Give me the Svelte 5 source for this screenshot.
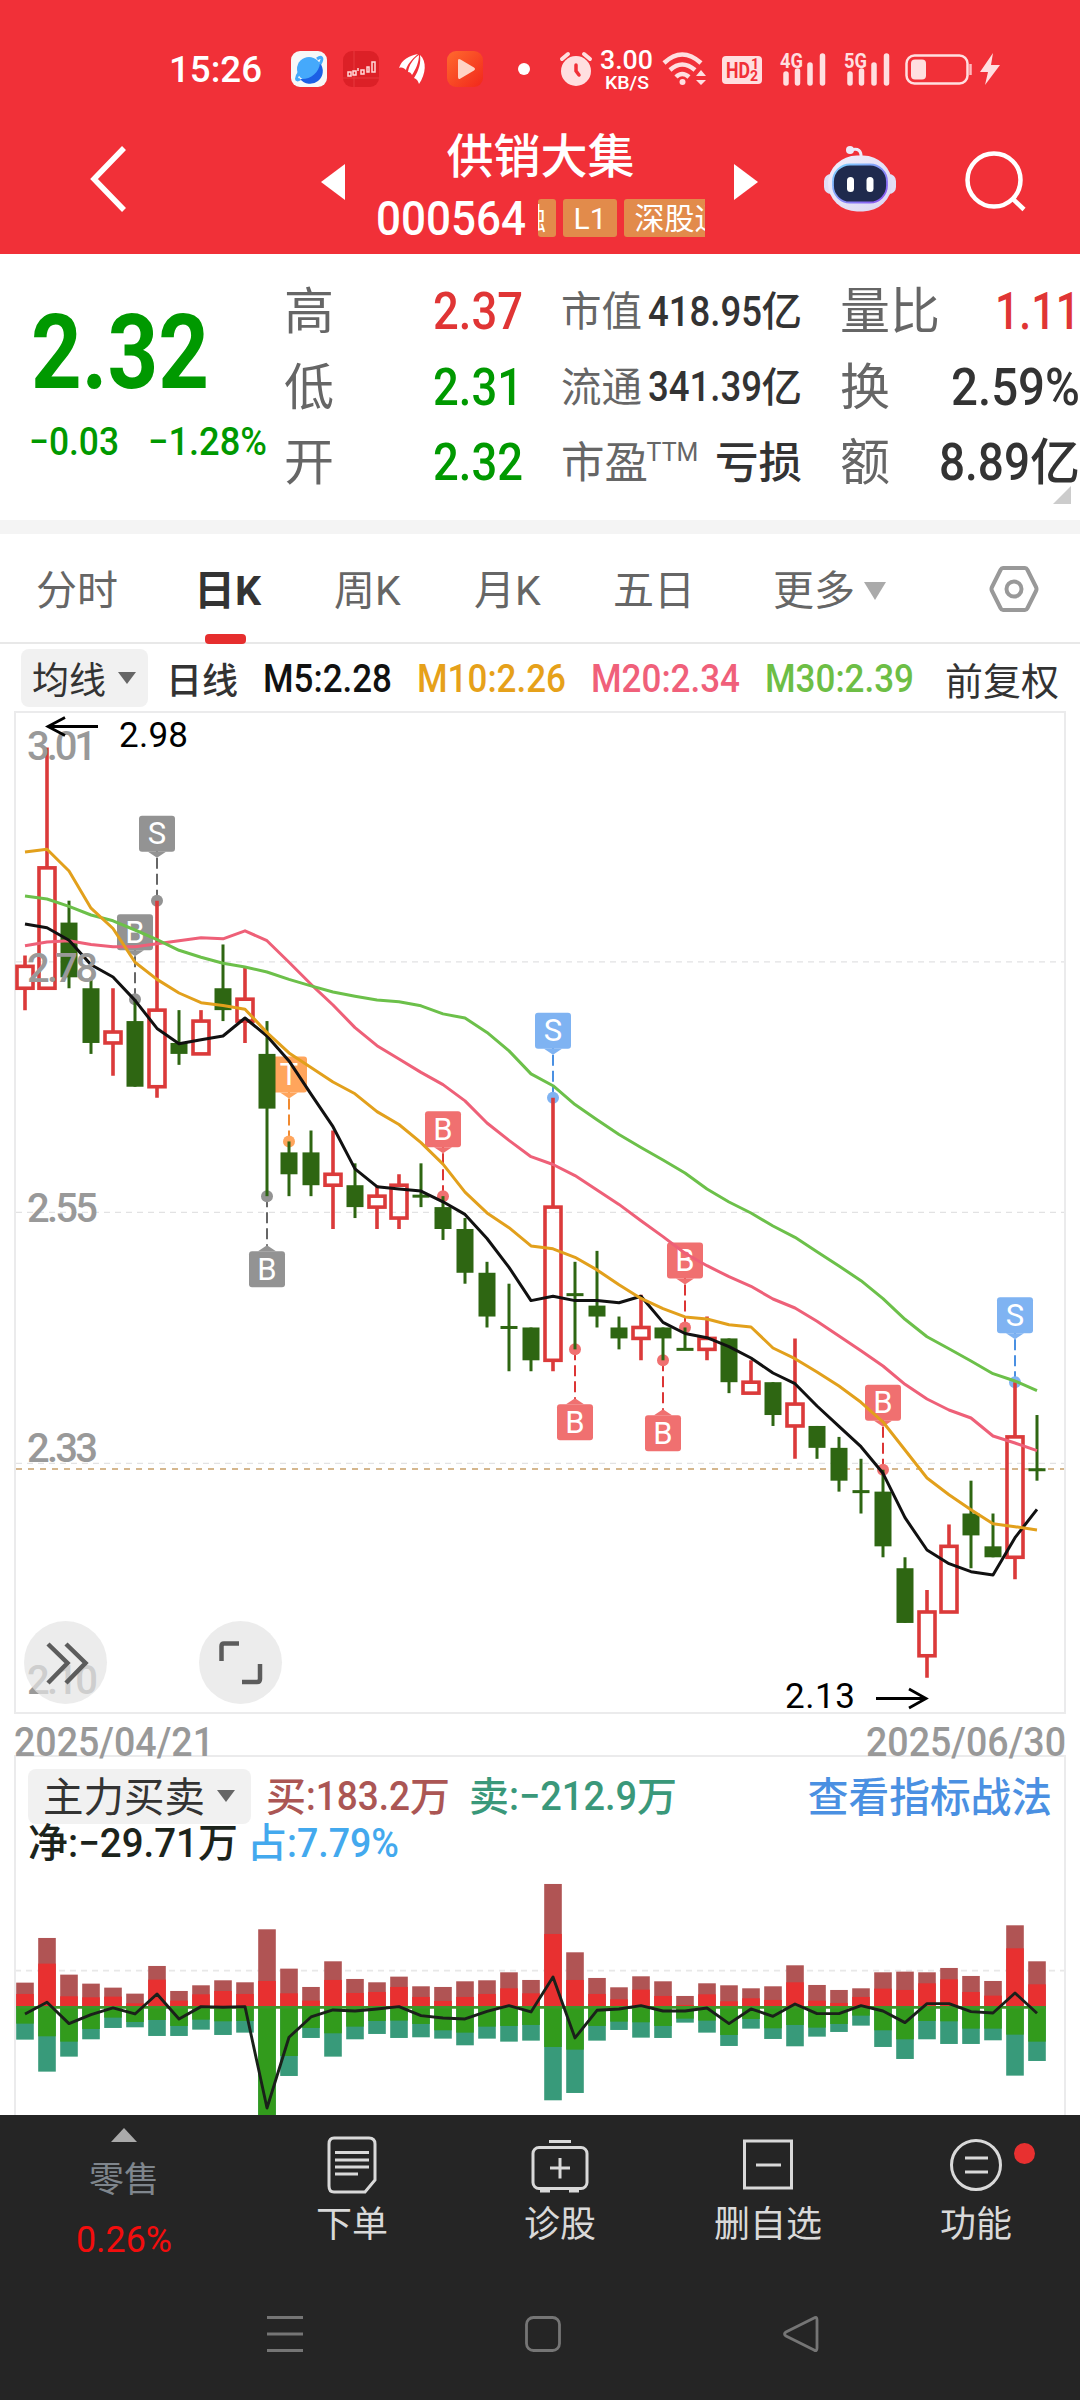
<script>
  // open, close, high, low
  const candles = [
    [2.76, 2.78, 2.79, 2.74], [2.76, 2.87, 2.98, 2.76], [2.82, 2.77, 2.84, 2.76], [2.76, 2.71, 2.77, 2.70],
    [2.71, 2.72, 2.76, 2.68], [2.73, 2.67, 2.75, 2.67], [2.67, 2.74, 2.84, 2.66], [2.71, 2.70, 2.74, 2.69],
    [2.70, 2.73, 2.74, 2.70], [2.76, 2.74, 2.80, 2.73], [2.73, 2.75, 2.78, 2.71], [2.70, 2.65, 2.73, 2.57],
    [2.61, 2.59, 2.62, 2.57], [2.61, 2.58, 2.63, 2.57], [2.58, 2.59, 2.63, 2.54], [2.58, 2.56, 2.60, 2.55],
    [2.56, 2.57, 2.58, 2.54], [2.55, 2.58, 2.59, 2.54], [2.57, 2.57, 2.60, 2.56], [2.56, 2.54, 2.57, 2.53],
    [2.54, 2.50, 2.55, 2.49], [2.50, 2.46, 2.51, 2.45], [2.45, 2.45, 2.49, 2.41], [2.45, 2.42, 2.45, 2.41],
    [2.42, 2.56, 2.66, 2.41], [2.48, 2.48, 2.51, 2.43], [2.47, 2.46, 2.52, 2.45], [2.45, 2.44, 2.46, 2.43],
    [2.44, 2.45, 2.48, 2.42], [2.45, 2.44, 2.45, 2.42], [2.43, 2.43, 2.45, 2.43], [2.43, 2.44, 2.46, 2.42],
    [2.44, 2.40, 2.44, 2.39], [2.39, 2.40, 2.42, 2.39], [2.40, 2.37, 2.40, 2.36], [2.36, 2.38, 2.44, 2.33],
    [2.36, 2.34, 2.36, 2.33], [2.34, 2.31, 2.35, 2.30], [2.30, 2.30, 2.33, 2.28], [2.30, 2.25, 2.32, 2.24],
    [2.23, 2.18, 2.24, 2.18], [2.15, 2.19, 2.21, 2.13], [2.19, 2.25, 2.27, 2.19], [2.28, 2.26, 2.31, 2.23],
    [2.25, 2.24, 2.28, 2.24], [2.24, 2.35, 2.40, 2.22], [2.32, 2.32, 2.37, 2.31]
  ];

  const averages = [
    { cls: "ma20", ys: [945.7, 941.9, 940.7, 944.5, 946.8, 946.8, 943.8, 940.7, 937.7, 938.8, 930.8, 940.7, 962.2, 984.3, 1005, 1027.6, 1045.7, 1059, 1072.4, 1084.6, 1100.9, 1123, 1140.4, 1156.7, 1164.5, 1175.6, 1190, 1204.4, 1220.7, 1236.6, 1253.3, 1265.7, 1276.7, 1286.3, 1299, 1308, 1321.3, 1336, 1350.7, 1366, 1384.3, 1399, 1410, 1418, 1436, 1443, 1450.7] },
    { cls: "ma30", ys: [895.9, 899, 906.3, 915, 920.8, 930, 939.6, 950.3, 957.2, 963.3, 967, 972, 979.4, 985.9, 992, 996.2, 999.9, 1001.7, 1005.8, 1013.9, 1018, 1032.4, 1050.9, 1073.9, 1085.7, 1104.6, 1119.7, 1134.5, 1147.5, 1160, 1173, 1189, 1202, 1213, 1226, 1237.3, 1251.7, 1266, 1280.7, 1298.7, 1319.3, 1336.7, 1348.7, 1361, 1373.7, 1381, 1390.7] },
    { cls: "ma5", ys: [923.9, 927.7, 940.3, 964.8, 977, 1000.4, 1028.4, 1043.7, 1039.8, 1036, 1018, 1036, 1060.9, 1094.2, 1126.7, 1168.9, 1186.7, 1188.9, 1191.1, 1201.8, 1214.4, 1238.5, 1267.3, 1300.6, 1296.2, 1300.6, 1300.6, 1302.8, 1296.2, 1322.4, 1333.5, 1337.7, 1346.7, 1358, 1373, 1383.7, 1406, 1426.3, 1446.7, 1473.3, 1517.7, 1550, 1563.7, 1571.7, 1575, 1537.7, 1509.3] },
    { cls: "ma10", ys: [851.9, 849.3, 871, 908.2, 928.5, 962.2, 979.4, 993, 1002.7, 1005.4, 1009.2, 1032.6, 1052.9, 1067.4, 1082, 1093.8, 1111.6, 1124.5, 1142.7, 1164.1, 1192.2, 1212.9, 1227.7, 1245.9, 1248.8, 1257.3, 1269.9, 1284.7, 1298.4, 1308.7, 1316.9, 1319, 1324.7, 1327, 1348, 1358.7, 1372, 1386, 1402.3, 1422, 1450, 1478, 1494.7, 1509.7, 1523.7, 1526.7, 1530] }
  ];

  const markers = [
    { i: 5, t: "B", p: 2.75, cls: "old" },
    { i: 6, t: "S", p: 2.84, cls: "old" },
    { i: 11, t: "B", p: 2.57, cls: "old", below: true },
    { i: 12, t: "T", p: 2.62, cls: "tee" },
    { i: 19, t: "B", p: 2.57, cls: "buy" },
    { i: 24, t: "S", p: 2.66, cls: "sell" },
    { i: 25, t: "B", p: 2.43, cls: "buy", below: true },
    { i: 29, t: "B", p: 2.42, cls: "buy", below: true },
    { i: 30, t: "B", p: 2.45, cls: "buy" },
    { i: 39, t: "B", p: 2.32, cls: "buy" },
    { i: 45, t: "S", p: 2.40, cls: "sell" }
  ];

  // buy total, buy main, sell main, sell total, net
  const flows = [
    [74, 40, 49, 97, -20], [208, 131, 87, 193, 15], [98, 33, 103, 148, -49], [71, 30, 65, 96, -22], [59, 32, 31, 62, -2],
    [41, 12, 44, 60, -20], [124, 83, 38, 86, 40], [49, 20, 56, 86, -35], [66, 39, 37, 67, 2], [81, 49, 42, 83, 0],
    [75, 40, 41, 76, 2], [234, 79, 330, 360, -302], [116, 42, 146, 206, -90], [61, 20, 62, 92, -29], [138, 82, 78, 148, -8],
    [85, 43, 58, 96, -11], [75, 46, 41, 80, -5], [92, 61, 40, 92, 2], [63, 31, 50, 90, -25], [61, 19, 69, 94, -32],
    [78, 31, 76, 114, -35], [81, 40, 58, 94, -12], [105, 57, 56, 103, 5], [82, 42, 53, 100, -14], [370, 220, 119, 279, 91],
    [165, 82, 127, 257, -92], [88, 40, 56, 100, -9], [60, 24, 43, 68, -5], [93, 53, 45, 91, 5], [78, 34, 56, 92, -11],
    [34, 7, 34, 46, -11], [72, 39, 40, 76, -2], [66, 18, 83, 116, -49], [57, 27, 35, 64, -5], [63, 22, 63, 95, -27],
    [126, 75, 53, 117, 10], [67, 20, 61, 88, -19], [52, 13, 50, 74, -19], [57, 31, 25, 55, 5], [105, 56, 69, 119, -11],
    [107, 52, 96, 155, -46], [105, 72, 41, 96, 11], [118, 84, 42, 110, 11], [94, 46, 64, 110, -13], [79, 35, 64, 99, -17],
    [246, 177, 82, 205, 43], [138, 69, 103, 161, -18]
  ];

  const base = 2007.3;
  const cx = (i) => 25 + i * 22;
  const py = (p) => 747.5 + (2.98 - p) * 1094.3;
  const line = (ys) => ys.map((y, i) => `${cx(i)},${y}`).join(" ");
  const netLine = line(flows.map((f) => base - f[4] / 3));
</script>

{#snippet fit(text, w, size, cls = "")}
  <svg class="fit {cls}" width={w} height={size}>
    <text x="0" y={size * 0.857} font-size={size} textLength={w} lengthAdjust="spacingAndGlyphs">{text}</text>
  </svg>
{/snippet}

{#snippet signal(name)}
  <svg class="signal" width="48" height="36">
    <text x="0" y="17" font-size="21" font-weight="700" textLength="23" lengthAdjust="spacingAndGlyphs">{name}</text>
    <path d="M6 23V32M17.500 20V32M30 14V32M42.500 5V32" stroke="#ffdfe0" stroke-width="5.500" stroke-linecap="round" />
  </svg>
{/snippet}

<div class="app">
  <header>
    <div class="status">
      <div class="left">
        {@render fit("15:26", 93, 36, "w500")}
        <svg class="app1" width="36" height="36">
          <rect width="36" height="36" rx="9" fill="#f7f7f8" />
          <circle cx="18" cy="18" r="12" fill="#45a9fb" />
          <path d="M29 12C28 22 19 29 9 28a12 12 0 0 0 20-16z" fill="#1c5fe5" />
          <path d="M9 28C4 31 5 26 8 22M26 8c4-3 7-2 3 5" fill="none" stroke="#45a9fb" stroke-width="3" />
        </svg>
        <svg class="app2" width="36" height="36">
          <rect width="36" height="36" rx="9" fill="#dc2027" />
          <path d="M0 27H36M11 0V36" stroke="#e8393e" />
          <path d="M5 25V21h3v4zM10 24v-4h3v4zM15 20v-3M18 23v-4h3v4zM24 21v-5h2v5zM29 21V11h3v10z" fill="none" stroke="#ffd9d9" stroke-width="1.500" />
        </svg>
        <svg class="kite" width="28" height="36" fill="#fff">
          <path d="M0 17C3 8 10 5 19 3C12 9 8 14 7 19C5 17 3 16 0 17z" />
          <path d="M9 21C10 14 14 8 20 4C20 11 17 18 13 24C12 22 11 21 9 21z" />
          <path d="M15 27C20 19 22 12 21 4C28 10 27 23 20 33C19 30 18 28 15 27z" />
        </svg>
        <svg class="play" width="36" height="36">
          <defs><linearGradient id="play" x1="0" y1="0" x2="1" y2="1"><stop offset="0" stop-color="#ff6a2e" /><stop offset="1" stop-color="#f2271b" /></linearGradient></defs>
          <rect width="36" height="36" rx="9" fill="url(#play)" />
          <path d="M11 9.500Q11 7 13.500 8.500L27 16.500Q29 18 27 19.500L13.500 27.500Q11 29 11 26z" fill="#ffd3c4" />
        </svg>
        <i class="dot"></i>
      </div>
      <div class="right">
        <svg width="34" height="36">
          <circle cx="17" cy="20" r="15" fill="#ffdfe0" />
          <path d="M3 8L9 3M31 8L25 3" stroke="#ffdfe0" stroke-width="4" stroke-linecap="round" />
          <path d="M17 14V20L20 24" fill="none" stroke="#f13038" stroke-width="3.500" stroke-linecap="round" />
        </svg>
        <div class="speed">
          {@render fit("3.00", 53, 25, "w500")}
          {@render fit("KB/S", 44, 19, "w500")}
        </div>
        <svg class="wifi" width="46" height="36" fill="none" stroke="#ffdfe0" stroke-width="4.500">
          <path d="M2 12Q20 -5 39 12M8 19Q20 8 33 19M14 26Q20 20 27 26" />
          <circle cx="20.500" cy="31" r="3" fill="#ffdfe0" stroke="none" />
          <path d="M39 19l5 6h-10zM39 34l5-5h-10z" fill="#ffdfe0" stroke="none" />
        </svg>
        <svg class="hd" width="40" height="36">
          <rect y="5" width="40" height="28" rx="4" fill="#ffdfe0" />
          <text x="4" y="27" font-size="22" font-weight="700" textLength="24" lengthAdjust="spacingAndGlyphs">HD</text>
          <text x="29" y="18" font-size="14" font-weight="700">1</text>
          <text x="28" y="30" font-size="14" font-weight="700">2</text>
        </svg>
        {@render signal("4G")}
        {@render signal("5G")}
        <svg class="battery" width="98" height="36">
          <rect x="1.500" y="4.500" width="61" height="28" rx="8" fill="none" stroke="#ffdfe0" stroke-width="2.500" />
          <rect x="6" y="8.500" width="15" height="20" rx="4" fill="#ffdfe0" />
          <path d="M65.500 13V24" stroke="#ffb9bc" stroke-width="2.500" />
          <path d="M88 2L75 21H83L80 34L95 14H86z" fill="#ffdfe0" />
        </svg>
      </div>
    </div>

    <div class="title">
      <svg class="back" width="40" height="70"><path d="M34 4L4 35L34 66" fill="none" stroke="#fff" stroke-width="5.500" /></svg>
      <svg class="prev" width="24" height="36"><path d="M24 0V36L0 18z" fill="#fff" /></svg>
      <div class="name">
        <div class="stock">供销大集</div>
        <div class="code">
          {@render fit("000564", 150, 48, "w500")}
          <div class="tags"><span class="cut">融</span><span>L1</span><span>深股通</span></div>
        </div>
      </div>
      <svg class="next" width="24" height="36"><path d="M0 0V36L24 18z" fill="#fff" /></svg>
      <svg class="robot" width="72" height="68">
        <defs>
          <linearGradient id="shell" x1="0" y1="0" x2="1" y2="1"><stop offset="0" stop-color="#f2effb" /><stop offset="1" stop-color="#d9d5f2" /></linearGradient>
          <linearGradient id="ring" x1="0" y1="0" x2="1" y2="1"><stop offset="0" stop-color="#7fd8ff" /><stop offset="1" stop-color="#8a4df0" /></linearGradient>
        </defs>
        <path d="M27 5Q38 2 37 13" fill="none" stroke="#eeeaf9" stroke-width="3" />
        <circle cx="26" cy="5" r="4" fill="#eeeaf9" />
        <rect x="0" y="29" width="72" height="20" rx="7" fill="#e2def5" />
        <rect x="4" y="10.500" width="64" height="56" rx="29" fill="url(#shell)" />
        <rect x="9" y="19.500" width="54" height="38" rx="17" fill="#1f2a4d" stroke="url(#ring)" stroke-width="1.800" />
        <rect x="23" y="32" width="7" height="15" rx="3.500" fill="#fff" />
        <rect x="42.500" y="32" width="7" height="15" rx="3.500" fill="#fff" />
      </svg>
      <svg class="search" width="62" height="62" fill="none" stroke="#fff" stroke-width="4.500">
        <circle cx="29" cy="29" r="26.500" /><path d="M48 48L59 58.500" />
      </svg>
    </div>
  </header>

  <section class="quote">
    <div class="price down">
      {@render fit("2.32", 178, 104, "w700")}
      <div class="change">
        {@render fit("−0.03", 90, 39, "w500")}
        {@render fit("−1.28%", 119, 39, "w500")}
      </div>
    </div>
    <ul>
      <li><span>高</span><b class="up">{@render fit("2.37", 90, 51, "w500")}</b></li>
      <li><span>低</span><b class="down">{@render fit("2.31", 90, 51, "w500")}</b></li>
      <li><span>开</span><b class="down">{@render fit("2.32", 90, 51, "w500")}</b></li>
    </ul>
    <ul class="mid">
      <li><span>市值</span><b>{@render fit("418.95", 114, 42, "w500")}<em>亿</em></b></li>
      <li><span>流通</span><b>{@render fit("341.39", 114, 42, "w500")}<em>亿</em></b></li>
      <li class="pe"><span>市盈</span><sup>TTM</sup><b><em>亏损</em></b></li>
    </ul>
    <ul class="last">
      <li><span>量比</span><b class="up">{@render fit("1.11", 85, 51, "w500")}</b></li>
      <li><span>换</span><b>{@render fit("2.59%", 129, 51, "w500")}</b></li>
      <li><span>额</span><b>{@render fit("8.89", 91, 51, "w500")}<em>亿</em></b></li>
    </ul>
    <i class="corner"></i>
  </section>

  <nav class="tabs">
    <span>分时</span>
    <span class="active">日K</span>
    <span>周K</span>
    <span>月K</span>
    <span>五日</span>
    <span class="more">更多<svg width="22" height="18"><path d="M0 0H22L11 18z" fill="#aaa" /></svg></span>
    <svg class="setting" width="50" height="46" fill="none" stroke="#999" stroke-width="4">
      <path d="M14 2H36Q37.500 2 38.500 4L47 21Q48 23 47 25L38.500 42Q37.500 44 36 44H14Q12.500 44 11.500 42L3 25Q2 23 3 21L11.500 4Q12.500 2 14 2z" />
      <circle cx="25" cy="23" r="7.500" />
    </svg>
  </nav>

  <div class="legend">
    <span class="pill">均线<svg width="18" height="12"><path d="M0 0H18L9 12z" fill="#666" /></svg></span>
    <span class="day">日线</span>
    {@render fit("M5:2.28", 129, 38, "w500 m5")}
    {@render fit("M10:2.26", 149, 38, "w500 m10")}
    {@render fit("M20:2.34", 149, 38, "w500 m20")}
    {@render fit("M30:2.39", 149, 38, "w500 m30")}
    <span class="adjust">前复权</span>
  </div>

  <div class="chart">
    <svg width="1080" height="1047" viewBox="0 709 1080 1047">
      <rect x="15" y="712" width="1050" height="1001" fill="none" stroke="#ebebec" stroke-width="2" />
      <path d="M16 961.800H1064M16 1212.300H1064M16 1463.300H1064" stroke="#e2e2e3" stroke-width="1.300" stroke-dasharray="6 5" />
      <path d="M16 1469H1064" stroke="#c8a06a" stroke-width="1.700" stroke-dasharray="6 6" />

      {#each markers as m}
        {@const y = py(m.p)}
        {@const s = m.below ? 1 : -1}
        {@const top = m.below ? y + 55 : y - 85}
        <g class="marker {m.cls}">
          <path class="lead" d="M{cx(m.i)} {y}V{y + s * 50}" />
          <circle cx={cx(m.i)} cy={y} r="6" />
          <rect x={cx(m.i) - 18} y={top} width="36" height="36" rx="3" />
          <path d="M{cx(m.i) - 9} {y + s * (m.below ? 55 : 49)}h18l-9 {-s * 6}z" />
          <text x={cx(m.i)} y={top + 28.5} text-anchor="middle">{m.t}</text>
        </g>
      {/each}

      {#each candles as [o, c, h, l], i}
        {#if c > o}
          <g class="rise">
            <path d="M{cx(i)} {py(h)}V{py(c)}M{cx(i)} {py(o)}V{py(l)}" />
            <rect x={cx(i) - 8} y={py(c)} width="16" height={py(o) - py(c)} />
          </g>
        {:else}
          <g class="fall">
            <rect x={cx(i) - 1.5} y={py(h)} width="3" height={py(l) - py(h)} />
            <rect x={cx(i) - 8.5} y={o === c ? py(o) - 1.5 : py(o)} width="17" height={Math.max(py(c) - py(o), 3)} />
          </g>
        {/if}
      {/each}

      {#each averages as a}
        <polyline class={a.cls} points={line(a.ys)} />
      {/each}

      <g class="axis">
        <text x="27" y="760" textLength="70">3.01</text>
        <text x="27" y="982" textLength="71">2.78</text>
        <text x="27" y="1222" textLength="71">2.55</text>
        <text x="27" y="1462" textLength="71">2.33</text>
        <text x="27" y="1694" textLength="71">2.10</text>
        <text x="14" y="1756" textLength="200" lengthAdjust="spacingAndGlyphs">2025/04/21</text>
        <text x="866" y="1756" textLength="200" lengthAdjust="spacingAndGlyphs">2025/06/30</text>
      </g>
      <g class="extreme">
        <text x="119" y="747" textLength="69">2.98</text>
        <text x="785" y="1708" textLength="70">2.13</text>
        <path d="M98 726.500H48M65 717.500L48 726.500L65 735.500M876 1698.500H926M909 1689L926 1698.500L909 1708" />
      </g>
    </svg>
    <div class="tools">
      <button aria-label="展开">
        <svg width="84" height="84" fill="none" stroke="#5c5c5c" stroke-width="4.500"><path d="M24 23L43.500 42L24 62M42 23L61.500 42L42 62" /></svg>
      </button>
      <button aria-label="全屏">
        <svg width="84" height="84" fill="none" stroke="#5c5c5c" stroke-width="4.500"><path d="M40 22.500H25Q22.500 22.500 22.500 25V40M61 43V58Q61 61 58 61H43" /></svg>
      </button>
    </div>
  </div>

  <section class="flow">
    <div class="row">
      <span class="pill wide"><em>主力买卖</em><svg width="18" height="12"><path d="M0 0H18L9 12z" fill="#666" /></svg></span>
      <span class="in"><em>买</em>{@render fit(":183.2", 104, 40, "w500")}<em>万</em></span>
      <span class="out"><em>卖</em>{@render fit(":−212.9", 128, 40, "w500")}<em>万</em></span>
      <span class="link"><em>查看指标战法</em></span>
    </div>
    <div class="row second">
      <span class="net"><em>净</em>{@render fit(":−29.71", 130, 40, "w500")}<em>万</em></span>
      <span class="pct"><em>占</em>{@render fit(":7.79%", 112, 40, "w500")}</span>
    </div>
    <svg class="bars" width="1050" height="250" viewBox="15 1865 1050 250">
      <path d="M15 1970.700H1065" stroke="#e8e8e8" stroke-width="1.700" stroke-dasharray="6 5" />
      {#each flows as [b, bm, sm, s], i}
        <rect x={cx(i) - 8.8} y={base - b / 3} width="17.6" height={b / 3} fill="#b05454" />
        <rect x={cx(i) - 8.8} y={base - bm / 3} width="17.6" height={bm / 3} fill="#e83030" />
        <rect x={cx(i) - 8.8} y={base} width="17.6" height={s / 3} fill="#389a7a" />
        <rect x={cx(i) - 8.8} y={base} width="17.6" height={sm / 3} fill="#329b1c" />
      {/each}
      <path d="M15 {base}H{cx(46) + 9}" stroke="#3e962a" stroke-width="2.800" />
      <polyline class="netline" points={netLine} />
    </svg>
  </section>

  <footer>
    <div class="menu">
      <div class="sector">
        <svg width="26" height="14"><path d="M0 14L13 0L26 14z" fill="#aaa" /></svg>
        <span>零售</span>
        {@render fit("0.26%", 96, 36)}
      </div>
      <div class="item">
        <svg width="60" height="60">
          <path d="M12 3H47Q53 3 53 9V45L43 57H12Q7 57 7 51V9Q7 3 12 3z" />
          <path d="M13 17.500H47M13 25H47M13 32H47M13 39H36" />
        </svg>
        <span>下单</span>
      </div>
      <div class="item">
        <svg width="60" height="60">
          <rect x="3" y="12.500" width="54" height="41" rx="6" />
          <path d="M19 6.500H41M30 23V43.500M20 33H40M10 56H20M39 56H49" />
        </svg>
        <span>诊股</span>
      </div>
      <div class="item">
        <svg width="60" height="60"><rect x="6.500" y="6" width="47" height="47" /><path d="M18 30H43" /></svg>
        <span>删自选</span>
      </div>
      <div class="item">
        <svg width="60" height="60"><circle cx="30" cy="30" r="24.500" /><path d="M19 23H42M19 37H42" /></svg>
        <span>功能</span>
        <i class="badge"></i>
      </div>
    </div>
    <div class="system">
      <svg width="40" height="40"><path d="M2 3.500H38M2 20H38M2 36.500H38" /></svg>
      <svg width="40" height="40"><rect x="3.500" y="3.500" width="33" height="33" rx="7" /></svg>
      <svg width="40" height="40"><path d="M33 4Q36 2 36 6V34Q36 38 33 36L5 22Q2 20 5 18z" /></svg>
    </div>
  </footer>
</div>

<style>
  :global(body) {
    background: #fff;
  }

  .app {
    width: 1080px;
    height: 2400px;
    overflow: hidden;
    background: #fff;
    color: #333;
    font-family: Roboto, "Noto Sans CJK SC", sans-serif;
  }

  svg {
    display: block;
    flex: none;
    overflow: visible;
  }

  em {
    font-style: normal;
    padding-top: 4px;
  }

  .fit {
    fill: currentColor;
  }

  .w500 {
    font-weight: 500;
  }

  .w700 {
    font-weight: 700;
  }

  header {
    height: 254px;
    background: #f13038;
    color: #fff;
  }

  .status {
    display: flex;
    justify-content: space-between;
    height: 130px;
    padding: 51px 77px 0 169px;
    box-sizing: border-box;
  }

  .status .left,
  .status .right {
    display: flex;
    align-items: flex-start;
    height: 36px;
  }

  .app1 {
    margin-left: 29px;
  }

  .app2 {
    margin-left: 16px;
  }

  .kite {
    margin-left: 20px;
  }

  .play {
    margin-left: 20px;
  }

  .dot {
    width: 12px;
    height: 12px;
    border-radius: 50%;
    background: #fff;
    margin: 12px 0 0 35px;
  }

  .speed {
    display: flex;
    flex-direction: column;
    align-items: center;
    margin: -3px 0 0 7px;
  }

  .wifi {
    margin-left: 9px;
  }

  .hd {
    margin-left: 14px;
    fill: #f13038;
  }

  .signal {
    margin-left: 18px;
    margin-right: -2px;
    fill: #ffdfe0;
  }

  .battery {
    margin-left: 15px;
  }

  .title {
    display: flex;
    align-items: flex-start;
    height: 124px;
  }

  .back {
    margin: 14px 0 0 90px;
  }

  .prev {
    margin: 34px 0 0 191px;
  }

  .name {
    width: 329px;
    margin-left: 31px;
  }

  .stock {
    height: 68px;
    line-height: 54px;
    font-size: 47px;
    font-weight: 500;
    text-align: center;
  }

  .code {
    display: flex;
    align-items: center;
    justify-content: space-between;
    height: 40px;
  }

  .tags {
    display: flex;
    gap: 7px;
    width: 167px;
    overflow: hidden;
  }

  .tags span {
    flex: none;
    height: 38px;
    line-height: 40px;
    padding: 0 10.500px;
    border-radius: 3px;
    background: #e28b4b;
    font-size: 30px;
    white-space: nowrap;
  }

  .tags .cut {
    width: 8px;
    padding: 0 10px 0 0;
    direction: rtl;
    overflow: hidden;
  }

  .next {
    margin: 34px 0 0 29px;
  }

  .robot {
    margin: 15px 0 0 66px;
  }

  .search {
    margin: 21px 0 0 69px;
  }

  .quote {
    position: relative;
    display: grid;
    grid-template-columns: 253px 277px 279px 240px;
    height: 266px;
    padding-left: 31px;
    border-bottom: 14px solid #f4f4f4;
  }

  .price {
    padding-top: 45px;
  }

  .change {
    display: flex;
    gap: 29px;
    padding-top: 19px;
    margin-left: -2px;
  }

  .up {
    color: #e03535;
  }

  .down {
    color: #009900;
  }

  ul {
    list-style: none;
    margin: 0;
    padding: 19px 38px 0 0;
  }

  li {
    display: flex;
    align-items: center;
    justify-content: space-between;
    height: 75.500px;
    line-height: 75px;
    font-size: 50px;
    color: #666;
  }

  li span {
    padding-top: 4px;
  }

  li b {
    display: flex;
    align-items: center;
    font-weight: 500;
  }

  li b:not(.up):not(.down) {
    color: #333;
  }

  .mid li {
    font-size: 40.500px;
  }

  .mid .pe {
    font-size: 43.500px;
  }

  sup {
    font-size: 25px;
    line-height: 44px;
    align-self: flex-start;
    margin: 7px 14px 0 -4px;
    font-weight: 400;
  }

  .last {
    padding-right: 0;
  }

  .corner {
    position: absolute;
    right: 9px;
    bottom: 16px;
    border-left: 18px solid transparent;
    border-bottom: 18px solid #ccc;
  }

  .tabs {
    display: grid;
    grid-template-columns: 155px 143px 140px 139px 155px 221px 52px;
    align-items: center;
    height: 110px;
    padding-left: 36px;
    padding-top: 2px;
    border-bottom: 2px solid #e8e8e8;
    box-sizing: border-box;
    font-size: 41px;
    color: #666;
  }

  .tabs span {
    position: relative;
    line-height: 60px;
    padding-top: 3px;
  }

  .tabs .active {
    color: #333;
    font-weight: 700;
    padding-left: 3px;
  }

  .active::after {
    content: "";
    position: absolute;
    left: 14px;
    bottom: -23px;
    width: 41px;
    height: 10px;
    border-radius: 4px;
    background: #e62e2e;
  }

  .tabs .more {
    display: flex;
    align-items: center;
    gap: 9px;
    padding-left: 5px;
  }

  .legend {
    display: flex;
    align-items: center;
    height: 65px;
    padding-left: 21px;
    padding-top: 3px;
    box-sizing: border-box;
  }

  .pill {
    display: flex;
    align-items: center;
    gap: 12px;
    box-sizing: border-box;
    width: 127px;
    height: 58px;
    padding-left: 11px;
    border-radius: 8px;
    background: #f1f1f1;
    font-size: 37px;
    color: #333;
  }

  .day {
    width: 97px;
    padding-left: 18px;
    font-size: 36px;
    font-weight: 500;
  }

  .m5 {
    color: #111;
    margin-right: 25px;
  }

  .m10 {
    color: #e6a11a;
    margin-right: 25px;
  }

  .m20 {
    color: #f0607a;
    margin-right: 25px;
  }

  .m30 {
    color: #6dbe45;
    margin-right: 31px;
  }

  .adjust {
    font-size: 38px;
  }

  .chart {
    position: relative;
    height: 1047px;
  }

  .marker text {
    fill: #fff;
    font-size: 31px;
  }

  .lead {
    stroke-width: 2;
    stroke-dasharray: 11 5;
  }

  .old {
    fill: #939393;
  }

  .old .lead {
    stroke: #666;
  }

  .tee {
    fill: #ffa55c;
  }

  .tee .lead {
    stroke: #f08a30;
  }

  .buy {
    fill: #f07070;
  }

  .buy .lead {
    stroke: #dc3535;
  }

  .sell {
    fill: #7fb3f2;
  }

  .sell .lead {
    stroke: #4a90e2;
  }

  .rise {
    fill: none;
    stroke: #db3a3a;
    stroke-width: 3.600;
  }

  .fall {
    fill: #2e6612;
  }

  polyline {
    fill: none;
    stroke-width: 3;
    stroke-linejoin: round;
  }

  .ma5 {
    stroke: #111;
  }

  .ma10 {
    stroke: #e2a01c;
  }

  .ma20 {
    stroke: #ee6078;
  }

  .ma30 {
    stroke: #6cc04a;
  }

  .axis {
    fill: #999;
    font-size: 40px;
    font-weight: 500;
  }

  .extreme {
    fill: #000;
    font-size: 35px;
  }

  .extreme path {
    fill: none;
    stroke: #000;
    stroke-width: 2.800;
  }

  .tools {
    position: absolute;
    left: 24px;
    top: 912px;
    display: flex;
    gap: 92px;
  }

  button {
    width: 83px;
    height: 83px;
    padding: 0;
    border: 0;
    border-radius: 50%;
    background: rgba(228, 228, 228, 0.7);
  }

  .flow {
    height: 360px;
    margin: -1px 14px 0;
    border: solid #ebebec;
    border-width: 2px 2px 0;
    box-sizing: border-box;
    overflow: hidden;
  }

  .row {
    display: flex;
    align-items: center;
    height: 54px;
    padding: 12px 0 0 12px;
    font-size: 40px;
    line-height: 54px;
  }

  .row span {
    display: flex;
    align-items: center;
  }

  .row .wide {
    width: 223px;
    height: 55px;
    padding-left: 15px;
    font-size: 40.500px;
  }

  .in {
    color: #ab5654;
    margin-left: 15px;
    font-weight: 500;
  }

  .out {
    color: #3a987a;
    margin-left: 19px;
    font-weight: 500;
  }

  .link {
    color: #4a90e2;
    margin-left: auto;
    margin-right: 12px;
    font-weight: 500;
    font-size: 40.700px;
  }

  .second {
    height: 36px;
    padding-top: 2px;
    line-height: 36px;
    padding-left: 12px;
  }

  .second em {
    padding-top: 2px;
  }

  .net {
    color: #1c241c;
    font-weight: 500;
  }

  .pct {
    color: #43a9ee;
    margin-left: 9px;
    font-weight: 500;
  }

  .bars {
    margin: 4px 0 0 -1px;
  }

  .netline {
    stroke: #1a201a;
    stroke-width: 2.900;
  }

  footer {
    height: 285px;
    background: #252525;
    color: #d9d9d9;
  }

  .menu {
    display: grid;
    grid-template-columns: 248px repeat(4, 208px);
    height: 199px;
  }

  .sector {
    display: flex;
    flex-direction: column;
    align-items: center;
    padding-top: 13px;
    color: #f30d0d;
  }

  .sector span {
    height: 79px;
    line-height: 78px;
    font-size: 35px;
    color: #7f868d;
  }

  .item {
    position: relative;
    display: flex;
    flex-direction: column;
    align-items: center;
    padding-top: 20px;
    font-size: 36px;
  }

  .item span {
    line-height: 60px;
  }

  .item svg,
  .system svg {
    fill: none;
    stroke: #d9d9d9;
    stroke-width: 3;
  }

  .badge {
    position: absolute;
    left: 142px;
    top: 28px;
    width: 21px;
    height: 21px;
    border-radius: 50%;
    background: #e83030;
  }

  .system {
    display: flex;
    gap: 218px;
    padding-left: 265px;
  }

  .system svg {
    stroke: #757575;
    stroke-width: 2.800;
  }
</style>
